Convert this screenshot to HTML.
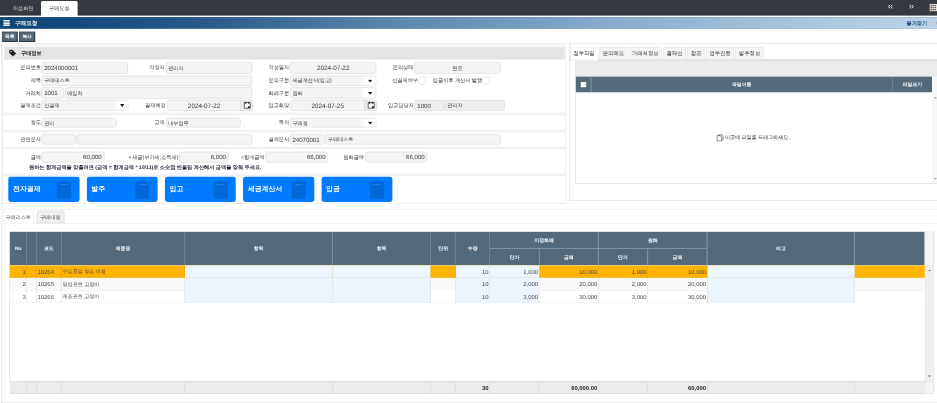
<!DOCTYPE html>
<html><head><meta charset="utf-8"><title>구매요청</title>
<style>
html,body{margin:0;padding:0;background:#fff;overflow:hidden;}
body{width:937px;height:403px;position:relative;font-family:"Liberation Sans",sans-serif;}
#w{position:absolute;left:0;top:0;width:1920px;height:826px;transform:scale(0.488021);transform-origin:0 0;overflow:hidden;background:#fff;}
#w div{position:absolute;}
#w{text-rendering:geometricPrecision;-webkit-font-smoothing:antialiased;}
</style></head><body><div id="w">
<div style="left:0.00px;top:0.00px;width:1920.00px;height:32.38px;background:#343a40;"></div>
<div style="left:11.07px;top:3.28px;width:72.95px;height:30.33px;font-size:10.5px;line-height:30.33px;text-align:center;color:#d8d8d8;white-space:nowrap;">처음화면</div>
<div style="left:84.01px;top:1.64px;width:74.79px;height:31.56px;background:#fff;border-radius:3px 3px 0 0;"></div>
<div style="left:83.60px;top:3.28px;width:75.20px;height:30.33px;font-size:10.5px;line-height:30.33px;text-align:center;color:#333;white-space:nowrap;">구매요청</div>
<svg style="position:absolute;left:1818.98px;top:9.22px" width="11" height="9" viewBox="0 0 11 9"><path d="M5 0.5L1.2 4.5 5 8.5M10 0.5L6.2 4.5 10 8.5" fill="none" stroke="#f4f4f4" stroke-width="2"/></svg>
<svg style="position:absolute;left:1861.60px;top:9.22px" width="11" height="9" viewBox="0 0 11 9"><path d="M1 0.5L4.8 4.5 1 8.5M6 0.5L9.8 4.5 6 8.5" fill="none" stroke="#f4f4f4" stroke-width="2"/></svg>
<svg style="position:absolute;left:1904.02px;top:7.79px" width="16" height="16" viewBox="0 0 16 16"><rect x="0" y="0" width="16" height="15" fill="#e8e4dc"/><rect x="0" y="0" width="1.6" height="15" fill="#1c4e86"/><path d="M3 2.5h2.5v2.5H3zM7 2.5h2.5v2.5H7zM11 2.5h2.5v2.5H11zM3 6.5h2.5v2.5H3zM11 6.5h2.5v2.5H11zM3 10.5h2.5v2.5H3zM7 10.5h2.5v2.5H7zM11 10.5h2.5v2.5H11z" fill="#333a42"/><path d="M7 6.5h2.5v2.5H7z" fill="#2a5a9a"/></svg>
<div style="left:0.00px;top:34.83px;width:1920.00px;height:23.77px;background:linear-gradient(90deg,#0f4577 0%,#134a7e 8%,#2a5a8c 22%,#5f88b0 43%,#86a9cc 64%,#a9c5e0 85%,#bdd3e8 100%);border-top:1px solid rgba(0,30,70,0.25);border-bottom:1px solid rgba(0,30,70,0.18);box-sizing:border-box;"></div>
<div style="left:81.96px;top:35.65px;width:1838.04px;height:22.54px;background-image:radial-gradient(rgba(255,255,255,0.16) 1px,transparent 1.3px);background-size:4px 4px;-webkit-mask-image:linear-gradient(90deg,transparent 0,#000 120px);mask-image:linear-gradient(90deg,transparent 0,#000 120px);"></div>
<div style="left:6.56px;top:40.98px;width:13.11px;height:2.87px;background:#fff;"></div>
<div style="left:6.56px;top:45.69px;width:13.11px;height:2.87px;background:#fff;"></div>
<div style="left:6.56px;top:50.41px;width:13.11px;height:2.87px;background:#fff;"></div>
<div style="left:30.74px;top:37.09px;width:92.21px;height:22.95px;font-size:11.5px;line-height:22.95px;text-align:left;color:#fff;white-space:nowrap;font-weight:bold;">구매요청</div>
<div style="left:1803.20px;top:36.68px;width:96.72px;height:22.54px;font-size:10.6px;line-height:22.54px;text-align:right;color:#24507e;white-space:nowrap;font-weight:bold;">즐겨찾기</div>
<div style="left:1908.73px;top:36.68px;width:23.56px;height:22.54px;font-size:15px;line-height:22.54px;text-align:center;color:#aab2ba;white-space:nowrap;">&#9733;</div>
<div style="left:3.69px;top:64.75px;width:32.38px;height:20.90px;background:#546a7b;border:2px solid #3a3f44;border-color:#4a5660 #2e3236 #2e3236 #4a5660;box-sizing:border-box;color:#fff;font-weight:bold;font-size:9.6px;text-align:center;line-height:16.9px;">목록</div>
<div style="left:39.34px;top:64.75px;width:32.38px;height:20.90px;background:#546a7b;border:2px solid #3a3f44;border-color:#4a5660 #2e3236 #2e3236 #4a5660;box-sizing:border-box;color:#fff;font-weight:bold;font-size:9.6px;text-align:center;line-height:16.9px;">복사</div>
<div style="left:2.05px;top:88.52px;width:1160.20px;height:340.35px;border:1px solid #dcdcdc;border-right:none;border-bottom:none;box-sizing:border-box;"></div>
<div style="left:5.33px;top:91.80px;width:1154.46px;height:140.16px;border:1px solid #dcdce4;box-sizing:border-box;background:#fff;"></div>
<div style="left:8.61px;top:95.90px;width:1147.90px;height:25.82px;background:#e4e4e4;"></div>
<svg style="position:absolute;left:17.62px;top:101.23px" width="16" height="16" viewBox="0 0 16 16"><path d="M1 1h6.5l7.5 7.5-6.5 6.5L1 7.5z" fill="#222"/><circle cx="4.5" cy="4.5" r="1.4" fill="#e4e4e4"/></svg>
<div style="left:43.03px;top:97.13px;width:120.90px;height:25.82px;font-size:11px;line-height:25.82px;text-align:left;color:#222;white-space:nowrap;font-weight:bold;letter-spacing:-0.5px;">구매정보</div>
<div style="left:-38.93px;top:128.48px;width:122.95px;height:23.56px;font-size:10.6px;line-height:23.56px;text-align:right;color:#333;white-space:nowrap;">문의번호</div>
<div style="left:85.45px;top:127.25px;width:176.43px;height:23.56px;background:#f5f5f5;border:1px solid #cfcfcf;border-radius:5px;box-sizing:border-box;font-size:10.5px;line-height:24.02px;text-align:left;color:#333;white-space:nowrap;overflow:hidden;padding:0 4px;font-size:12.5px;">2024000001</div>
<div style="left:214.74px;top:128.48px;width:122.95px;height:23.56px;font-size:10.6px;line-height:23.56px;text-align:right;color:#333;white-space:nowrap;">작성자</div>
<div style="left:339.74px;top:127.25px;width:177.45px;height:23.56px;background:#f5f5f5;border:1px solid #cfcfcf;border-radius:5px;box-sizing:border-box;font-size:10.5px;line-height:24.02px;text-align:left;color:#333;white-space:nowrap;overflow:hidden;padding:0 4px;">관리자</div>
<div style="left:469.65px;top:128.48px;width:122.95px;height:23.56px;font-size:10.6px;line-height:23.56px;text-align:right;color:#333;white-space:nowrap;">작성일자</div>
<div style="left:594.24px;top:127.25px;width:177.04px;height:23.56px;background:#f5f5f5;border:1px solid #cfcfcf;border-radius:5px;box-sizing:border-box;font-size:10.5px;line-height:24.02px;text-align:center;color:#333;white-space:nowrap;overflow:hidden;padding:0 4px;font-size:13px;">2024-07-22</div>
<div style="left:724.15px;top:128.48px;width:122.95px;height:23.56px;font-size:10.6px;line-height:23.56px;text-align:right;color:#333;white-space:nowrap;">문의상태</div>
<div style="left:848.73px;top:127.25px;width:177.45px;height:23.56px;background:#f5f5f5;border:1px solid #cfcfcf;border-radius:5px;box-sizing:border-box;font-size:10.5px;line-height:24.02px;text-align:center;color:#333;white-space:nowrap;overflow:hidden;padding:0 4px;">완료</div>
<div style="left:-38.93px;top:156.14px;width:122.95px;height:21.31px;font-size:10.6px;line-height:21.31px;text-align:right;color:#333;white-space:nowrap;">제목</div>
<div style="left:85.45px;top:154.91px;width:431.74px;height:21.31px;background:#f5f5f5;border:1px solid #cfcfcf;border-radius:5px;box-sizing:border-box;font-size:10.5px;line-height:21.77px;text-align:left;color:#333;white-space:nowrap;overflow:hidden;padding:0 4px;">구매테스트</div>
<div style="left:469.65px;top:156.14px;width:122.95px;height:21.31px;font-size:10.6px;line-height:21.31px;text-align:right;color:#333;white-space:nowrap;">문의구분</div>
<div style="left:594.24px;top:154.91px;width:177.04px;height:21.31px;background:#f5f5f5;border:1px solid #cfcfcf;border-radius:5px;box-sizing:border-box;font-size:10.5px;line-height:21.77px;text-align:left;color:#333;white-space:nowrap;overflow:hidden;padding:0 4px;background:linear-gradient(90deg,#f5f5f5 0,#f5f5f5 calc(100% - 30px),#fff calc(100% - 22px),#fff 100%);">세금계산서(입고)</div>
<svg style="position:absolute;left:754.07px;top:163.11px" width="9" height="6.5" viewBox="0 0 9 6.5"><path d="M0 0.3h9L4.5 6.2z" fill="#1a1a1a"/></svg>
<div style="left:778.66px;top:156.14px;width:77.87px;height:21.31px;font-size:10.6px;line-height:21.31px;text-align:right;color:#333;white-space:nowrap;">선결제여부</div>
<div style="left:858.16px;top:156.55px;width:14.96px;height:16.19px;background:#fff;border:1px solid #cfcfcf;border-radius:4px;box-sizing:border-box;"></div>
<div style="left:870.86px;top:156.14px;width:117.21px;height:21.31px;font-size:10.6px;line-height:21.31px;text-align:right;color:#333;white-space:nowrap;">입금이후 계산서 발행</div>
<div style="left:989.30px;top:156.55px;width:14.96px;height:16.19px;background:#fff;border:1px solid #cfcfcf;border-radius:4px;box-sizing:border-box;"></div>
<div style="left:-38.93px;top:180.53px;width:122.95px;height:22.34px;font-size:10.6px;line-height:22.34px;text-align:right;color:#333;white-space:nowrap;">거래처</div>
<div style="left:85.45px;top:179.30px;width:45.28px;height:22.34px;background:#f5f5f5;border:1px solid #cfcfcf;border-radius:5px;box-sizing:border-box;font-size:10.5px;line-height:22.79px;text-align:left;color:#333;white-space:nowrap;overflow:hidden;padding:0 4px;font-size:12.5px;">1001</div>
<div style="left:132.78px;top:179.30px;width:384.41px;height:22.34px;background:#f5f5f5;border:1px solid #cfcfcf;border-radius:5px;box-sizing:border-box;font-size:10.5px;line-height:22.79px;text-align:left;color:#333;white-space:nowrap;overflow:hidden;padding:0 4px;">매입처</div>
<div style="left:469.65px;top:180.53px;width:122.95px;height:22.34px;font-size:10.6px;line-height:22.34px;text-align:right;color:#333;white-space:nowrap;">화폐구분</div>
<div style="left:594.24px;top:179.30px;width:177.04px;height:22.34px;background:#f5f5f5;border:1px solid #cfcfcf;border-radius:5px;box-sizing:border-box;font-size:10.5px;line-height:22.79px;text-align:left;color:#333;white-space:nowrap;overflow:hidden;padding:0 4px;background:linear-gradient(90deg,#f5f5f5 0,#f5f5f5 calc(100% - 30px),#fff calc(100% - 22px),#fff 100%);">원화</div>
<svg style="position:absolute;left:754.07px;top:188.00px" width="9" height="6.5" viewBox="0 0 9 6.5"><path d="M0 0.3h9L4.5 6.2z" fill="#1a1a1a"/></svg>
<div style="left:-38.93px;top:206.14px;width:122.95px;height:21.72px;font-size:10.6px;line-height:21.72px;text-align:right;color:#333;white-space:nowrap;">결제조건</div>
<div style="left:85.45px;top:204.91px;width:177.66px;height:21.72px;background:#f5f5f5;border:1px solid #cfcfcf;border-radius:5px;box-sizing:border-box;font-size:10.5px;line-height:22.18px;text-align:left;color:#333;white-space:nowrap;overflow:hidden;padding:0 4px;background:linear-gradient(90deg,#f5f5f5 0,#f5f5f5 calc(100% - 30px),#fff calc(100% - 22px),#fff 100%);">선결제</div>
<svg style="position:absolute;left:245.89px;top:213.31px" width="9" height="6.5" viewBox="0 0 9 6.5"><path d="M0 0.3h9L4.5 6.2z" fill="#1a1a1a"/></svg>
<div style="left:216.79px;top:206.14px;width:122.95px;height:21.72px;font-size:10.6px;line-height:21.72px;text-align:right;color:#333;white-space:nowrap;">결재예정</div>
<div style="left:341.58px;top:204.91px;width:153.27px;height:21.72px;background:#f5f5f5;border:1px solid #cfcfcf;border-radius:5px;box-sizing:border-box;font-size:10.5px;line-height:22.18px;text-align:center;color:#333;white-space:nowrap;overflow:hidden;padding:0 4px;border-radius:5px 0 0 5px;font-size:13px;">2024-07-22</div>
<div style="left:493.42px;top:204.91px;width:25.82px;height:21.72px;background:#f5f5f5;border:1px solid #cfcfcf;border-radius:5px;box-sizing:border-box;background:#ececec;border-radius:0 5px 5px 0;"></div>
<svg style="position:absolute;left:499.36px;top:208.19px" width="15" height="15" viewBox="0 0 15 15"><path d="M1.2 2.2h12.6v11.6H1.2z" fill="#fff" stroke="#333" stroke-width="1.9"/><path d="M4.5 0v5M10.5 0v5" stroke="#333" stroke-width="1.9"/><path d="M9 9.5h4v4H9z" fill="#2a2a2a"/></svg>
<div style="left:469.65px;top:206.14px;width:122.95px;height:21.72px;font-size:10.6px;line-height:21.72px;text-align:right;color:#333;white-space:nowrap;">입고희망</div>
<div style="left:594.24px;top:204.91px;width:154.50px;height:21.72px;background:#f5f5f5;border:1px solid #cfcfcf;border-radius:5px;box-sizing:border-box;font-size:10.5px;line-height:22.18px;text-align:center;color:#333;white-space:nowrap;overflow:hidden;padding:0 4px;border-radius:5px 0 0 5px;font-size:13px;">2024-07-25</div>
<div style="left:747.10px;top:204.91px;width:25.82px;height:21.72px;background:#f5f5f5;border:1px solid #cfcfcf;border-radius:5px;box-sizing:border-box;background:#ececec;border-radius:0 5px 5px 0;"></div>
<svg style="position:absolute;left:753.04px;top:208.19px" width="15" height="15" viewBox="0 0 15 15"><path d="M1.2 2.2h12.6v11.6H1.2z" fill="#fff" stroke="#333" stroke-width="1.9"/><path d="M4.5 0v5M10.5 0v5" stroke="#333" stroke-width="1.9"/><path d="M9 9.5h4v4H9z" fill="#2a2a2a"/></svg>
<div style="left:724.97px;top:206.14px;width:122.95px;height:21.72px;font-size:10.6px;line-height:21.72px;text-align:right;color:#333;white-space:nowrap;">입고담당자</div>
<div style="left:849.96px;top:204.91px;width:60.65px;height:21.72px;background:#f5f5f5;border:1px solid #cfcfcf;border-radius:5px;box-sizing:border-box;font-size:10.5px;line-height:22.18px;text-align:left;color:#333;white-space:nowrap;overflow:hidden;padding:0 4px;font-size:12.5px;background:#efefef;border-radius:3px;">1000</div>
<div style="left:911.64px;top:204.91px;width:122.74px;height:21.72px;background:#f5f5f5;border:1px solid #cfcfcf;border-radius:5px;box-sizing:border-box;font-size:10.5px;line-height:22.18px;text-align:left;color:#333;white-space:nowrap;overflow:hidden;padding:0 4px;background:#efefef;border-radius:3px;">관리자</div>
<div style="left:5.33px;top:234.42px;width:1154.46px;height:33.20px;border:1px solid #dcdce4;box-sizing:border-box;background:#fff;"></div>
<div style="left:-38.93px;top:243.02px;width:122.95px;height:19.67px;font-size:10.6px;line-height:19.67px;text-align:right;color:#333;white-space:nowrap;">용도</div>
<div style="left:85.45px;top:241.79px;width:153.89px;height:19.67px;background:#f5f5f5;border:1px solid #cfcfcf;border-radius:5px;box-sizing:border-box;font-size:10.5px;line-height:20.13px;text-align:left;color:#333;white-space:nowrap;overflow:hidden;padding:0 4px;">관리</div>
<div style="left:214.74px;top:243.02px;width:122.95px;height:19.67px;font-size:10.6px;line-height:19.67px;text-align:right;color:#333;white-space:nowrap;">고객</div>
<div style="left:339.53px;top:241.79px;width:153.89px;height:19.67px;background:#f5f5f5;border:1px solid #cfcfcf;border-radius:5px;box-sizing:border-box;font-size:10.5px;line-height:20.13px;text-align:left;color:#333;white-space:nowrap;overflow:hidden;padding:0 4px;">내부업무</div>
<div style="left:469.65px;top:243.02px;width:122.95px;height:19.67px;font-size:10.6px;line-height:19.67px;text-align:right;color:#333;white-space:nowrap;">목적</div>
<div style="left:594.24px;top:241.79px;width:177.04px;height:19.67px;background:#f5f5f5;border:1px solid #cfcfcf;border-radius:5px;box-sizing:border-box;font-size:10.5px;line-height:20.13px;text-align:left;color:#333;white-space:nowrap;overflow:hidden;padding:0 4px;background:linear-gradient(90deg,#f5f5f5 0,#f5f5f5 calc(100% - 30px),#fff calc(100% - 22px),#fff 100%);">구매용</div>
<svg style="position:absolute;left:754.07px;top:249.17px" width="9" height="6.5" viewBox="0 0 9 6.5"><path d="M0 0.3h9L4.5 6.2z" fill="#1a1a1a"/></svg>
<div style="left:5.33px;top:269.66px;width:1154.46px;height:31.97px;border:1px solid #dcdce4;box-sizing:border-box;background:#fff;"></div>
<div style="left:-38.93px;top:276.22px;width:122.95px;height:21.31px;font-size:10.6px;line-height:21.31px;text-align:right;color:#333;white-space:nowrap;">관련문서</div>
<div style="left:85.45px;top:274.99px;width:70.69px;height:21.31px;background:#f5f5f5;border:1px solid #cfcfcf;border-radius:5px;box-sizing:border-box;font-size:10.5px;line-height:21.77px;text-align:left;color:#333;white-space:nowrap;overflow:hidden;padding:0 4px;"></div>
<div style="left:158.19px;top:274.99px;width:359.00px;height:21.31px;background:#f5f5f5;border:1px solid #cfcfcf;border-radius:5px;box-sizing:border-box;font-size:10.5px;line-height:21.77px;text-align:left;color:#333;white-space:nowrap;overflow:hidden;padding:0 4px;"></div>
<div style="left:469.65px;top:276.22px;width:122.95px;height:21.31px;font-size:10.6px;line-height:21.31px;text-align:right;color:#333;white-space:nowrap;">결재문서</div>
<div style="left:594.24px;top:274.99px;width:70.49px;height:21.31px;background:#f5f5f5;border:1px solid #cfcfcf;border-radius:5px;box-sizing:border-box;font-size:10.5px;line-height:21.77px;text-align:left;color:#333;white-space:nowrap;overflow:hidden;padding:0 4px;font-size:12.5px;">24070001</div>
<div style="left:666.77px;top:274.99px;width:359.41px;height:21.31px;background:#f5f5f5;border:1px solid #cfcfcf;border-radius:5px;box-sizing:border-box;font-size:10.5px;line-height:21.77px;text-align:left;color:#333;white-space:nowrap;overflow:hidden;padding:0 4px;">구매테스트</div>
<div style="left:5.33px;top:303.68px;width:1154.46px;height:52.87px;border:1px solid #dcdce4;box-sizing:border-box;background:#fff;"></div>
<div style="left:-38.93px;top:312.69px;width:122.95px;height:21.11px;font-size:10.6px;line-height:21.11px;text-align:right;color:#333;white-space:nowrap;">금액</div>
<div style="left:85.45px;top:311.46px;width:128.07px;height:21.11px;background:#f5f5f5;border:1px solid #cfcfcf;border-radius:5px;box-sizing:border-box;font-size:10.5px;line-height:21.56px;text-align:right;color:#333;white-space:nowrap;overflow:hidden;padding:0 4px;font-size:12.5px;">60,000</div>
<div style="left:245.89px;top:312.69px;width:119.67px;height:21.11px;font-size:10.6px;line-height:21.11px;text-align:right;color:#333;white-space:nowrap;">&bull; 세금(부가세,소득세)</div>
<div style="left:367.20px;top:311.46px;width:100.82px;height:21.11px;background:#f5f5f5;border:1px solid #cfcfcf;border-radius:5px;box-sizing:border-box;font-size:10.5px;line-height:21.56px;text-align:right;color:#333;white-space:nowrap;overflow:hidden;padding:0 4px;font-size:12.5px;">6,000</div>
<div style="left:471.29px;top:312.69px;width:70.90px;height:21.11px;font-size:10.6px;line-height:21.11px;text-align:right;color:#333;white-space:nowrap;">=합계금액</div>
<div style="left:544.24px;top:311.46px;width:127.86px;height:21.11px;background:#f5f5f5;border:1px solid #cfcfcf;border-radius:5px;box-sizing:border-box;font-size:10.5px;line-height:21.56px;text-align:right;color:#333;white-space:nowrap;overflow:hidden;padding:0 4px;font-size:12.5px;">66,000</div>
<div style="left:676.20px;top:312.69px;width:69.67px;height:21.11px;font-size:10.6px;line-height:21.11px;text-align:right;color:#333;white-space:nowrap;">원화금액</div>
<div style="left:747.51px;top:311.46px;width:127.86px;height:21.11px;background:#f5f5f5;border:1px solid #cfcfcf;border-radius:5px;box-sizing:border-box;font-size:10.5px;line-height:21.56px;text-align:right;color:#333;white-space:nowrap;overflow:hidden;padding:0 4px;font-size:12.5px;">66,000</div>
<div style="left:59.42px;top:336.46px;width:555.30px;height:16.39px;font-size:10.6px;line-height:16.39px;text-align:left;color:#1a2030;white-space:nowrap;font-weight:bold;">원하는 합계금액을 맞출려면 (금액 = 합계금액 * 10/11)로 소숫점 반올림 계산해서 금액을 맞춰 주세요.</div>
<div style="left:5.33px;top:358.59px;width:1154.46px;height:59.42px;border:1px solid #dcdce4;box-sizing:border-box;background:#fff;"></div>
<div style="left:17.21px;top:362.28px;width:145.49px;height:51.64px;background:#007bff;border-radius:5px;"></div>
<div style="left:26.64px;top:372.53px;width:93.03px;height:28.69px;font-size:14.2px;line-height:28.69px;text-align:left;color:#fff;white-space:nowrap;font-weight:bold;">전자결재</div>
<svg style="position:absolute;left:116.18px;top:368.22px" width="30.1" height="39.3" viewBox="0 0 30 39"><path d="M2 4.5h8c0-6 10-6 10 0h8a2 2 0 0 1 2 2v30.5a2 2 0 0 1-2 2H2a2 2 0 0 1-2-2V6.5a2 2 0 0 1 2-2z" fill="#0069da"/><rect x="7" y="9" width="16" height="2.2" fill="#1a82f0"/><circle cx="15" cy="3.6" r="1.4" fill="#0a7bf5"/></svg>
<div style="left:177.55px;top:362.28px;width:145.49px;height:51.64px;background:#007bff;border-radius:5px;"></div>
<div style="left:186.98px;top:372.53px;width:93.03px;height:28.69px;font-size:14.2px;line-height:28.69px;text-align:left;color:#fff;white-space:nowrap;font-weight:bold;">발주</div>
<svg style="position:absolute;left:276.53px;top:368.22px" width="30.1" height="39.3" viewBox="0 0 30 39"><path d="M2 4.5h8c0-6 10-6 10 0h8a2 2 0 0 1 2 2v30.5a2 2 0 0 1-2 2H2a2 2 0 0 1-2-2V6.5a2 2 0 0 1 2-2z" fill="#0069da"/><rect x="7" y="9" width="16" height="2.2" fill="#1a82f0"/><circle cx="15" cy="3.6" r="1.4" fill="#0a7bf5"/></svg>
<div style="left:337.90px;top:362.28px;width:145.49px;height:51.64px;background:#007bff;border-radius:5px;"></div>
<div style="left:347.32px;top:372.53px;width:93.03px;height:28.69px;font-size:14.2px;line-height:28.69px;text-align:left;color:#fff;white-space:nowrap;font-weight:bold;">입고</div>
<svg style="position:absolute;left:436.87px;top:368.22px" width="30.1" height="39.3" viewBox="0 0 30 39"><path d="M2 4.5h8c0-6 10-6 10 0h8a2 2 0 0 1 2 2v30.5a2 2 0 0 1-2 2H2a2 2 0 0 1-2-2V6.5a2 2 0 0 1 2-2z" fill="#0069da"/><rect x="7" y="9" width="16" height="2.2" fill="#1a82f0"/><circle cx="15" cy="3.6" r="1.4" fill="#0a7bf5"/></svg>
<div style="left:498.24px;top:362.28px;width:145.49px;height:51.64px;background:#007bff;border-radius:5px;"></div>
<div style="left:507.66px;top:372.53px;width:93.03px;height:28.69px;font-size:14.2px;line-height:28.69px;text-align:left;color:#fff;white-space:nowrap;font-weight:bold;">세금계산서</div>
<svg style="position:absolute;left:597.21px;top:368.22px" width="30.1" height="39.3" viewBox="0 0 30 39"><path d="M2 4.5h8c0-6 10-6 10 0h8a2 2 0 0 1 2 2v30.5a2 2 0 0 1-2 2H2a2 2 0 0 1-2-2V6.5a2 2 0 0 1 2-2z" fill="#0069da"/><rect x="7" y="9" width="16" height="2.2" fill="#1a82f0"/><circle cx="15" cy="3.6" r="1.4" fill="#0a7bf5"/></svg>
<div style="left:658.58px;top:362.28px;width:145.49px;height:51.64px;background:#007bff;border-radius:5px;"></div>
<div style="left:668.00px;top:372.53px;width:93.03px;height:28.69px;font-size:14.2px;line-height:28.69px;text-align:left;color:#fff;white-space:nowrap;font-weight:bold;">입금</div>
<svg style="position:absolute;left:757.55px;top:368.22px" width="30.1" height="39.3" viewBox="0 0 30 39"><path d="M2 4.5h8c0-6 10-6 10 0h8a2 2 0 0 1 2 2v30.5a2 2 0 0 1-2 2H2a2 2 0 0 1-2-2V6.5a2 2 0 0 1 2-2z" fill="#0069da"/><rect x="7" y="9" width="16" height="2.2" fill="#1a82f0"/><circle cx="15" cy="3.6" r="1.4" fill="#0a7bf5"/></svg>
<div style="left:1165.73px;top:88.52px;width:754.27px;height:322.32px;border:1px solid #d4d6de;border-right:none;box-sizing:border-box;"></div>
<div style="left:1165.93px;top:122.33px;width:754.07px;height:1.64px;background:#c4c4c4;"></div>
<div style="left:1167.57px;top:95.90px;width:58.19px;height:27.87px;background:#fff;border:1px solid #cfcfcf;border-bottom:none;border-radius:4px 4px 0 0;box-sizing:border-box;"></div>
<div style="left:1167.57px;top:97.54px;width:58.19px;height:25.82px;font-size:11px;line-height:25.82px;text-align:center;color:#333;white-space:nowrap;">첨부파일</div>
<div style="left:1228.23px;top:95.90px;width:57.78px;height:26.84px;background:#f4f4f4;border:1px solid #cfcfcf;border-bottom:1px solid #c8c8c8;border-radius:4px 4px 0 0;box-sizing:border-box;"></div>
<div style="left:1228.23px;top:97.54px;width:57.78px;height:25.82px;font-size:11px;line-height:25.82px;text-align:center;color:#333;white-space:nowrap;">문의메모</div>
<div style="left:1288.47px;top:95.90px;width:67.62px;height:26.84px;background:#f4f4f4;border:1px solid #cfcfcf;border-bottom:1px solid #c8c8c8;border-radius:4px 4px 0 0;box-sizing:border-box;"></div>
<div style="left:1288.47px;top:97.54px;width:67.62px;height:25.82px;font-size:11px;line-height:25.82px;text-align:center;color:#333;white-space:nowrap;">거래처정보</div>
<div style="left:1358.55px;top:95.90px;width:47.13px;height:26.84px;background:#f4f4f4;border:1px solid #cfcfcf;border-bottom:1px solid #c8c8c8;border-radius:4px 4px 0 0;box-sizing:border-box;"></div>
<div style="left:1358.55px;top:97.54px;width:47.13px;height:25.82px;font-size:11px;line-height:25.82px;text-align:center;color:#333;white-space:nowrap;">결재선</div>
<div style="left:1408.14px;top:95.90px;width:36.88px;height:26.84px;background:#f4f4f4;border:1px solid #cfcfcf;border-bottom:1px solid #c8c8c8;border-radius:4px 4px 0 0;box-sizing:border-box;"></div>
<div style="left:1408.14px;top:97.54px;width:36.88px;height:25.82px;font-size:11px;line-height:25.82px;text-align:center;color:#333;white-space:nowrap;">참조</div>
<div style="left:1447.48px;top:95.90px;width:56.55px;height:26.84px;background:#f4f4f4;border:1px solid #cfcfcf;border-bottom:1px solid #c8c8c8;border-radius:4px 4px 0 0;box-sizing:border-box;"></div>
<div style="left:1447.48px;top:97.54px;width:56.55px;height:25.82px;font-size:11px;line-height:25.82px;text-align:center;color:#333;white-space:nowrap;">업무진행</div>
<div style="left:1506.49px;top:95.90px;width:59.01px;height:26.84px;background:#f4f4f4;border:1px solid #cfcfcf;border-bottom:1px solid #c8c8c8;border-radius:4px 4px 0 0;box-sizing:border-box;"></div>
<div style="left:1506.49px;top:97.54px;width:59.01px;height:25.82px;font-size:11px;line-height:25.82px;text-align:center;color:#333;white-space:nowrap;">발주정보</div>
<div style="left:1178.64px;top:124.18px;width:741.36px;height:252.04px;border:1px solid #d0d0d0;border-top:none;border-right:none;box-sizing:border-box;"></div>
<div style="left:1179.87px;top:124.58px;width:740.13px;height:31.97px;background:#ebebeb;"></div>
<div style="left:1179.87px;top:156.55px;width:730.30px;height:32.79px;background:#546a7b;"></div>
<div style="left:1210.40px;top:156.55px;width:1.43px;height:32.79px;background:#8a9aa6;"></div>
<div style="left:1828.00px;top:156.55px;width:1.43px;height:32.79px;background:#8a9aa6;"></div>
<div style="left:1190.11px;top:168.03px;width:11.07px;height:11.07px;background:#fff;border-radius:1px;"></div>
<div style="left:1211.01px;top:157.78px;width:617.60px;height:32.79px;font-size:10px;line-height:32.79px;text-align:center;color:#fff;white-space:nowrap;font-weight:bold;">파일이름</div>
<div style="left:1828.61px;top:157.78px;width:81.55px;height:32.79px;font-size:10px;line-height:32.79px;text-align:center;color:#fff;white-space:nowrap;font-weight:bold;">파일크기</div>
<div style="left:1910.16px;top:156.55px;width:9.84px;height:218.84px;background:#f6f6f6;"></div>
<svg style="position:absolute;left:1912.62px;top:197.53px" width="7.38" height="4.10" viewBox="0 0 3.6 2"><path d="M0 2 L1.8 0 L3.6 2 z" fill="#999"/></svg>
<svg style="position:absolute;left:1912.62px;top:363.51px" width="7.38" height="4.10" viewBox="0 0 3.6 2"><path d="M0 0 L3.6 0 L1.8 2 z" fill="#999"/></svg>
<svg style="position:absolute;left:1468.38px;top:274.99px" width="15" height="15" viewBox="0 0 15 15"><path d="M1 3h7l3 3v8H1z M4 1h7l3 3v8" fill="none" stroke="#333" stroke-width="1.4"/></svg>
<div style="left:1485.39px;top:271.71px;width:153.89px;height:22.54px;font-size:10.4px;line-height:22.54px;text-align:left;color:#222;white-space:nowrap;letter-spacing:-0.05px;">이곳에 파일을 드래그하세요.</div>
<div style="left:0.00px;top:428.26px;width:1920.00px;height:1.23px;background:#dcdce4;"></div>
<div style="left:0.00px;top:456.95px;width:1920.00px;height:1.23px;background:#e2e2e2;"></div>
<div style="left:4.10px;top:431.95px;width:66.39px;height:26.23px;background:#fff;border:1px solid #d8d8d8;border-bottom:none;border-radius:4px 4px 0 0;box-sizing:border-box;"></div>
<div style="left:4.10px;top:433.59px;width:66.39px;height:24.59px;font-size:10.4px;line-height:24.59px;text-align:center;color:#444;white-space:nowrap;">구매리스트</div>
<div style="left:74.59px;top:431.95px;width:57.37px;height:25.41px;background:#f1f1f1;border:1px solid #d0d0d0;border-radius:4px 4px 0 0;box-sizing:border-box;"></div>
<div style="left:74.59px;top:433.59px;width:57.37px;height:24.59px;font-size:10.4px;line-height:24.59px;text-align:center;color:#444;white-space:nowrap;">구매내용</div>
<div style="left:2.05px;top:457.77px;width:1924.10px;height:367.61px;border:1px solid #d6d6d6;border-top:none;box-sizing:border-box;"></div>
<div style="left:20.08px;top:474.98px;width:1875.33px;height:69.05px;background:#546a7b;"></div>
<div style="left:1895.41px;top:474.98px;width:18.03px;height:331.95px;background:#efefef;border-left:1px solid #dcdcdc;border-right:1px solid #dcdcdc;box-sizing:border-box;"></div>
<div style="left:1895.41px;top:781.52px;width:18.03px;height:25.82px;background:#f5f5f5;border:1px solid #dcdcdc;box-sizing:border-box;"></div>
<div style="left:1895.41px;top:474.98px;width:18.03px;height:69.05px;background:#f5f5f5;border:1px solid #dcdcdc;box-sizing:border-box;"></div>
<div style="left:19.47px;top:544.03px;width:1875.94px;height:238.31px;background:#fff;border-left:1px solid #cdcdcd;box-sizing:border-box;"></div>
<div style="left:53.99px;top:474.98px;width:1.43px;height:69.05px;background:#8797a3;"></div>
<div style="left:73.87px;top:474.98px;width:1.43px;height:69.05px;background:#8797a3;"></div>
<div style="left:124.89px;top:474.98px;width:1.43px;height:69.05px;background:#8797a3;"></div>
<div style="left:377.96px;top:474.98px;width:1.43px;height:69.05px;background:#8797a3;"></div>
<div style="left:680.40px;top:474.98px;width:1.43px;height:69.05px;background:#8797a3;"></div>
<div style="left:882.03px;top:474.98px;width:1.43px;height:69.05px;background:#8797a3;"></div>
<div style="left:932.85px;top:474.98px;width:1.43px;height:69.05px;background:#8797a3;"></div>
<div style="left:1002.93px;top:474.98px;width:1.43px;height:69.05px;background:#8797a3;"></div>
<div style="left:1104.15px;top:508.99px;width:1.43px;height:35.04px;background:#8797a3;"></div>
<div style="left:1225.46px;top:474.98px;width:1.43px;height:69.05px;background:#8797a3;"></div>
<div style="left:1326.28px;top:508.99px;width:1.43px;height:35.04px;background:#8797a3;"></div>
<div style="left:1448.40px;top:474.98px;width:1.43px;height:69.05px;background:#8797a3;"></div>
<div style="left:1750.44px;top:474.98px;width:1.43px;height:69.05px;background:#8797a3;"></div>
<div style="left:1003.65px;top:508.28px;width:445.47px;height:1.43px;background:#8797a3;"></div>
<div style="left:20.08px;top:476.21px;width:34.63px;height:69.05px;font-size:10px;line-height:69.05px;text-align:center;color:#fff;white-space:nowrap;font-weight:bold;">No</div>
<div style="left:74.59px;top:476.21px;width:51.02px;height:69.05px;font-size:10px;line-height:69.05px;text-align:center;color:#fff;white-space:nowrap;font-weight:bold;">코드</div>
<div style="left:125.61px;top:476.21px;width:253.06px;height:69.05px;font-size:10px;line-height:69.05px;text-align:center;color:#fff;white-space:nowrap;font-weight:bold;">제품명</div>
<div style="left:378.67px;top:476.21px;width:302.45px;height:69.05px;font-size:10px;line-height:69.05px;text-align:center;color:#fff;white-space:nowrap;font-weight:bold;">항목</div>
<div style="left:681.12px;top:476.21px;width:201.63px;height:69.05px;font-size:10px;line-height:69.05px;text-align:center;color:#fff;white-space:nowrap;font-weight:bold;">항목</div>
<div style="left:882.75px;top:476.21px;width:50.82px;height:69.05px;font-size:10px;line-height:69.05px;text-align:center;color:#fff;white-space:nowrap;font-weight:bold;">단위</div>
<div style="left:933.57px;top:476.21px;width:70.08px;height:69.05px;font-size:10px;line-height:69.05px;text-align:center;color:#fff;white-space:nowrap;font-weight:bold;">수량</div>
<div style="left:1003.65px;top:476.21px;width:222.53px;height:34.01px;font-size:10px;line-height:34.01px;text-align:center;color:#fff;white-space:nowrap;font-weight:bold;">지정화폐</div>
<div style="left:1226.18px;top:476.21px;width:222.94px;height:34.01px;font-size:10px;line-height:34.01px;text-align:center;color:#fff;white-space:nowrap;font-weight:bold;">원화</div>
<div style="left:1003.65px;top:510.22px;width:101.23px;height:35.04px;font-size:10px;line-height:35.04px;text-align:center;color:#fff;white-space:nowrap;font-weight:bold;">단가</div>
<div style="left:1104.87px;top:510.22px;width:121.31px;height:35.04px;font-size:10px;line-height:35.04px;text-align:center;color:#fff;white-space:nowrap;font-weight:bold;">금액</div>
<div style="left:1226.18px;top:510.22px;width:100.82px;height:35.04px;font-size:10px;line-height:35.04px;text-align:center;color:#fff;white-space:nowrap;font-weight:bold;">단가</div>
<div style="left:1326.99px;top:510.22px;width:122.13px;height:35.04px;font-size:10px;line-height:35.04px;text-align:center;color:#fff;white-space:nowrap;font-weight:bold;">금액</div>
<div style="left:1449.12px;top:476.21px;width:302.04px;height:69.05px;font-size:10px;line-height:69.05px;text-align:center;color:#fff;white-space:nowrap;font-weight:bold;">비고</div>
<div style="left:20.08px;top:544.03px;width:1875.33px;height:25.61px;background:#ffb400;"></div>
<div style="left:378.67px;top:544.03px;width:302.45px;height:25.61px;background:#edf5ff;"></div>
<div style="left:681.12px;top:544.03px;width:201.63px;height:25.61px;background:#edf5ff;"></div>
<div style="left:933.57px;top:544.03px;width:70.08px;height:25.61px;background:#edf5ff;"></div>
<div style="left:1003.65px;top:544.03px;width:101.23px;height:25.61px;background:#edf5ff;"></div>
<div style="left:1449.12px;top:544.03px;width:302.04px;height:25.61px;background:#edf5ff;"></div>
<div style="left:20.08px;top:568.93px;width:1875.33px;height:1.43px;background:#cccccc;"></div>
<div style="left:54.20px;top:544.03px;width:1.02px;height:25.61px;background:#e0a000;"></div>
<div style="left:74.07px;top:544.03px;width:1.02px;height:25.61px;background:#e0a000;"></div>
<div style="left:125.10px;top:544.03px;width:1.02px;height:25.61px;background:#e0a000;"></div>
<div style="left:378.16px;top:544.03px;width:1.02px;height:25.61px;background:#e0a000;"></div>
<div style="left:680.61px;top:544.03px;width:1.02px;height:25.61px;background:#d9d9d9;"></div>
<div style="left:882.24px;top:544.03px;width:1.02px;height:25.61px;background:#e0a000;"></div>
<div style="left:933.05px;top:544.03px;width:1.02px;height:25.61px;background:#e0a000;"></div>
<div style="left:1003.13px;top:544.03px;width:1.02px;height:25.61px;background:#d9d9d9;"></div>
<div style="left:1104.36px;top:544.03px;width:1.02px;height:25.61px;background:#d9d9d9;"></div>
<div style="left:1225.66px;top:544.03px;width:1.02px;height:25.61px;background:#e0a000;"></div>
<div style="left:1326.48px;top:544.03px;width:1.02px;height:25.61px;background:#e0a000;"></div>
<div style="left:1448.61px;top:544.03px;width:1.02px;height:25.61px;background:#e0a000;"></div>
<div style="left:1750.64px;top:544.03px;width:1.02px;height:25.61px;background:#d9d9d9;"></div>
<div style="left:20.08px;top:545.26px;width:32.79px;height:25.61px;font-size:12px;line-height:25.61px;text-align:right;color:#444;white-space:nowrap;">1</div>
<div style="left:77.05px;top:545.26px;width:48.56px;height:25.61px;font-size:12px;line-height:25.61px;text-align:left;color:#444;white-space:nowrap;">10264</div>
<div style="left:128.07px;top:545.26px;width:250.60px;height:25.61px;font-size:10.4px;line-height:25.61px;text-align:left;color:#444;white-space:nowrap;">수도꿘임 청소 비용</div>
<div style="left:933.57px;top:545.26px;width:67.62px;height:25.61px;font-size:12px;line-height:25.61px;text-align:right;color:#444;white-space:nowrap;">10</div>
<div style="left:1003.65px;top:545.26px;width:98.77px;height:25.61px;font-size:12px;line-height:25.61px;text-align:right;color:#444;white-space:nowrap;">1,000</div>
<div style="left:1104.87px;top:545.26px;width:118.85px;height:25.61px;font-size:12px;line-height:25.61px;text-align:right;color:#444;white-space:nowrap;">10,000</div>
<div style="left:1226.18px;top:545.26px;width:98.36px;height:25.61px;font-size:12px;line-height:25.61px;text-align:right;color:#444;white-space:nowrap;">1,000</div>
<div style="left:1326.99px;top:545.26px;width:119.67px;height:25.61px;font-size:12px;line-height:25.61px;text-align:right;color:#444;white-space:nowrap;">10,000</div>
<div style="left:20.08px;top:569.65px;width:1875.33px;height:25.61px;background:#f9f9f9;"></div>
<div style="left:378.67px;top:569.65px;width:302.45px;height:25.61px;background:#edf5ff;"></div>
<div style="left:681.12px;top:569.65px;width:201.63px;height:25.61px;background:#edf5ff;"></div>
<div style="left:933.57px;top:569.65px;width:70.08px;height:25.61px;background:#edf5ff;"></div>
<div style="left:1003.65px;top:569.65px;width:101.23px;height:25.61px;background:#edf5ff;"></div>
<div style="left:1449.12px;top:569.65px;width:302.04px;height:25.61px;background:#edf5ff;"></div>
<div style="left:20.08px;top:594.54px;width:1875.33px;height:1.43px;background:#cccccc;"></div>
<div style="left:54.20px;top:569.65px;width:1.02px;height:25.61px;background:#d9d9d9;"></div>
<div style="left:74.07px;top:569.65px;width:1.02px;height:25.61px;background:#d9d9d9;"></div>
<div style="left:125.10px;top:569.65px;width:1.02px;height:25.61px;background:#d9d9d9;"></div>
<div style="left:378.16px;top:569.65px;width:1.02px;height:25.61px;background:#d9d9d9;"></div>
<div style="left:680.61px;top:569.65px;width:1.02px;height:25.61px;background:#d9d9d9;"></div>
<div style="left:882.24px;top:569.65px;width:1.02px;height:25.61px;background:#d9d9d9;"></div>
<div style="left:933.05px;top:569.65px;width:1.02px;height:25.61px;background:#d9d9d9;"></div>
<div style="left:1003.13px;top:569.65px;width:1.02px;height:25.61px;background:#d9d9d9;"></div>
<div style="left:1104.36px;top:569.65px;width:1.02px;height:25.61px;background:#d9d9d9;"></div>
<div style="left:1225.66px;top:569.65px;width:1.02px;height:25.61px;background:#d9d9d9;"></div>
<div style="left:1326.48px;top:569.65px;width:1.02px;height:25.61px;background:#d9d9d9;"></div>
<div style="left:1448.61px;top:569.65px;width:1.02px;height:25.61px;background:#d9d9d9;"></div>
<div style="left:1750.64px;top:569.65px;width:1.02px;height:25.61px;background:#d9d9d9;"></div>
<div style="left:20.08px;top:570.88px;width:32.79px;height:25.61px;font-size:12px;line-height:25.61px;text-align:right;color:#444;white-space:nowrap;">2</div>
<div style="left:77.05px;top:570.88px;width:48.56px;height:25.61px;font-size:12px;line-height:25.61px;text-align:left;color:#444;white-space:nowrap;">10265</div>
<div style="left:128.07px;top:570.88px;width:250.60px;height:25.61px;font-size:10.4px;line-height:25.61px;text-align:left;color:#444;white-space:nowrap;">영업관련 고정비</div>
<div style="left:933.57px;top:570.88px;width:67.62px;height:25.61px;font-size:12px;line-height:25.61px;text-align:right;color:#444;white-space:nowrap;">10</div>
<div style="left:1003.65px;top:570.88px;width:98.77px;height:25.61px;font-size:12px;line-height:25.61px;text-align:right;color:#444;white-space:nowrap;">2,000</div>
<div style="left:1104.87px;top:570.88px;width:118.85px;height:25.61px;font-size:12px;line-height:25.61px;text-align:right;color:#444;white-space:nowrap;">20,000</div>
<div style="left:1226.18px;top:570.88px;width:98.36px;height:25.61px;font-size:12px;line-height:25.61px;text-align:right;color:#444;white-space:nowrap;">2,000</div>
<div style="left:1326.99px;top:570.88px;width:119.67px;height:25.61px;font-size:12px;line-height:25.61px;text-align:right;color:#444;white-space:nowrap;">20,000</div>
<div style="left:20.08px;top:595.26px;width:1875.33px;height:25.41px;background:#fff;"></div>
<div style="left:378.67px;top:595.26px;width:302.45px;height:25.41px;background:#edf5ff;"></div>
<div style="left:681.12px;top:595.26px;width:201.63px;height:25.41px;background:#edf5ff;"></div>
<div style="left:933.57px;top:595.26px;width:70.08px;height:25.41px;background:#edf5ff;"></div>
<div style="left:1003.65px;top:595.26px;width:101.23px;height:25.41px;background:#edf5ff;"></div>
<div style="left:1449.12px;top:595.26px;width:302.04px;height:25.41px;background:#edf5ff;"></div>
<div style="left:882.75px;top:595.26px;width:50.82px;height:25.41px;background:#fff;"></div>
<div style="left:20.08px;top:619.95px;width:1731.07px;height:1.43px;background:#e6ecf2;"></div>
<div style="left:54.20px;top:595.26px;width:1.02px;height:25.41px;background:#d9d9d9;"></div>
<div style="left:74.07px;top:595.26px;width:1.02px;height:25.41px;background:#d9d9d9;"></div>
<div style="left:125.10px;top:595.26px;width:1.02px;height:25.41px;background:#d9d9d9;"></div>
<div style="left:378.16px;top:595.26px;width:1.02px;height:25.41px;background:#d9d9d9;"></div>
<div style="left:680.61px;top:595.26px;width:1.02px;height:25.41px;background:#d9d9d9;"></div>
<div style="left:882.24px;top:595.26px;width:1.02px;height:25.41px;background:#d9d9d9;"></div>
<div style="left:933.05px;top:595.26px;width:1.02px;height:25.41px;background:#d9d9d9;"></div>
<div style="left:1003.13px;top:595.26px;width:1.02px;height:25.41px;background:#d9d9d9;"></div>
<div style="left:1104.36px;top:595.26px;width:1.02px;height:25.41px;background:#d9d9d9;"></div>
<div style="left:1225.66px;top:595.26px;width:1.02px;height:25.41px;background:#d9d9d9;"></div>
<div style="left:1326.48px;top:595.26px;width:1.02px;height:25.41px;background:#d9d9d9;"></div>
<div style="left:1448.61px;top:595.26px;width:1.02px;height:25.41px;background:#d9d9d9;"></div>
<div style="left:1750.64px;top:595.26px;width:1.02px;height:25.41px;background:#d9d9d9;"></div>
<div style="left:20.08px;top:596.49px;width:32.79px;height:25.41px;font-size:12px;line-height:25.41px;text-align:right;color:#444;white-space:nowrap;">3</div>
<div style="left:77.05px;top:596.49px;width:48.56px;height:25.41px;font-size:12px;line-height:25.41px;text-align:left;color:#444;white-space:nowrap;">10266</div>
<div style="left:128.07px;top:596.49px;width:250.60px;height:25.41px;font-size:10.4px;line-height:25.41px;text-align:left;color:#444;white-space:nowrap;">케조관련 고정비</div>
<div style="left:933.57px;top:596.49px;width:67.62px;height:25.41px;font-size:12px;line-height:25.41px;text-align:right;color:#444;white-space:nowrap;">10</div>
<div style="left:1003.65px;top:596.49px;width:98.77px;height:25.41px;font-size:12px;line-height:25.41px;text-align:right;color:#444;white-space:nowrap;">3,000</div>
<div style="left:1104.87px;top:596.49px;width:118.85px;height:25.41px;font-size:12px;line-height:25.41px;text-align:right;color:#444;white-space:nowrap;">30,000</div>
<div style="left:1226.18px;top:596.49px;width:98.36px;height:25.41px;font-size:12px;line-height:25.41px;text-align:right;color:#444;white-space:nowrap;">3,000</div>
<div style="left:1326.99px;top:596.49px;width:119.67px;height:25.41px;font-size:12px;line-height:25.41px;text-align:right;color:#444;white-space:nowrap;">30,000</div>
<div style="left:20.08px;top:781.11px;width:1875.33px;height:26.23px;background:#ececec;border-top:1px solid #cfcfcf;border-bottom:1px solid #cfcfcf;box-sizing:border-box;"></div>
<div style="left:54.20px;top:781.11px;width:1.02px;height:26.23px;background:#d2d2d2;"></div>
<div style="left:74.07px;top:781.11px;width:1.02px;height:26.23px;background:#d2d2d2;"></div>
<div style="left:125.10px;top:781.11px;width:1.02px;height:26.23px;background:#d2d2d2;"></div>
<div style="left:378.16px;top:781.11px;width:1.02px;height:26.23px;background:#d2d2d2;"></div>
<div style="left:680.61px;top:781.11px;width:1.02px;height:26.23px;background:#d2d2d2;"></div>
<div style="left:882.24px;top:781.11px;width:1.02px;height:26.23px;background:#d2d2d2;"></div>
<div style="left:933.05px;top:781.11px;width:1.02px;height:26.23px;background:#d2d2d2;"></div>
<div style="left:1003.13px;top:781.11px;width:1.02px;height:26.23px;background:#d2d2d2;"></div>
<div style="left:1104.36px;top:781.11px;width:1.02px;height:26.23px;background:#d2d2d2;"></div>
<div style="left:1225.66px;top:781.11px;width:1.02px;height:26.23px;background:#d2d2d2;"></div>
<div style="left:1326.48px;top:781.11px;width:1.02px;height:26.23px;background:#d2d2d2;"></div>
<div style="left:1448.61px;top:781.11px;width:1.02px;height:26.23px;background:#d2d2d2;"></div>
<div style="left:1750.64px;top:781.11px;width:1.02px;height:26.23px;background:#d2d2d2;"></div>
<div style="left:933.57px;top:782.34px;width:67.62px;height:26.23px;font-size:12px;line-height:26.23px;text-align:right;color:#222;white-space:nowrap;font-weight:bold;">30</div>
<div style="left:1104.87px;top:782.34px;width:118.85px;height:26.23px;font-size:12px;line-height:26.23px;text-align:right;color:#222;white-space:nowrap;font-weight:bold;">60,000.00</div>
<div style="left:1326.99px;top:782.34px;width:119.67px;height:26.23px;font-size:12px;line-height:26.23px;text-align:right;color:#222;white-space:nowrap;font-weight:bold;">60,000</div>
<svg style="position:absolute;left:1901.15px;top:552.03px" width="7.38" height="4.10" viewBox="0 0 3.6 2"><path d="M0 2 L1.8 0 L3.6 2 z" fill="#777"/></svg>
<svg style="position:absolute;left:1901.15px;top:768.82px" width="7.38" height="4.10" viewBox="0 0 3.6 2"><path d="M0 0 L3.6 0 L1.8 2 z" fill="#777"/></svg>
</div></body></html>
